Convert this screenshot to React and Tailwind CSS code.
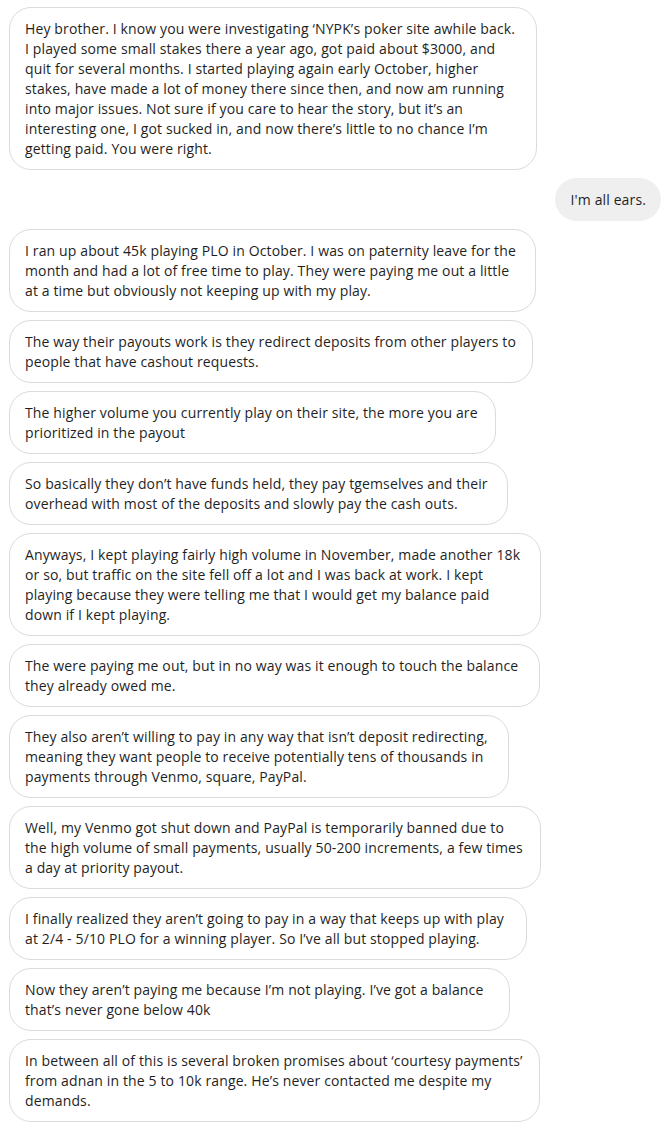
const messages = [
  {
    w: "w-[528px]",
    lines: [
      "Hey brother. I know you were investigating \u2018NYPK\u2019s poker site awhile back.",
      "I played some small stakes there a year ago, got paid about $3000, and",
      "quit for several months. I started playing again early October, higher",
      "stakes, have made a lot of money there since then, and now am running",
      "into major issues. Not sure if you care to hear the story, but it\u2019s an",
      "interesting one, I got sucked in, and now there\u2019s little to no chance I\u2019m",
      "getting paid. You were right.",
    ],
  },
  { me: true, lines: ["I'm all ears."] },
  {
    w: "w-[527px]",
    lines: [
      "I ran up about 45k playing PLO in October. I was on paternity leave for the",
      "month and had a lot of free time to play. They were paying me out a little",
      "at a time but obviously not keeping up with my play.",
    ],
  },
  {
    w: "w-[524px]",
    lines: [
      "The way their payouts work is they redirect deposits from other players to",
      "people that have cashout requests.",
    ],
  },
  {
    w: "w-[487px]",
    lines: [
      "The higher volume you currently play on their site, the more you are",
      "prioritized in the payout",
    ],
  },
  {
    w: "w-[499px]",
    lines: [
      "So basically they don\u2019t have funds held, they pay tgemselves and their",
      "overhead with most of the deposits and slowly pay the cash outs.",
    ],
  },
  {
    w: "w-[532px]",
    lines: [
      "Anyways, I kept playing fairly high volume in November, made another 18k",
      "or so, but traffic on the site fell off a lot and I was back at work. I kept",
      "playing because they were telling me that I would get my balance paid",
      "down if I kept playing.",
    ],
  },
  {
    w: "w-[531px]",
    lines: [
      "The were paying me out, but in no way was it enough to touch the balance",
      "they already owed me.",
    ],
  },
  {
    w: "w-[500px]",
    lines: [
      "They also aren\u2019t willing to pay in any way that isn\u2019t deposit redirecting,",
      "meaning they want people to receive potentially tens of thousands in",
      "payments through Venmo, square, PayPal.",
    ],
  },
  {
    w: "w-[532px]",
    lines: [
      "Well, my Venmo got shut down and PayPal is temporarily banned due to",
      "the high volume of small payments, usually 50-200 increments, a few times",
      "a day at priority payout.",
    ],
  },
  {
    w: "w-[518px]",
    lines: [
      "I finally realized they aren\u2019t going to pay in a way that keeps up with play",
      "at 2/4 - 5/10 PLO for a winning player. So I\u2019ve all but stopped playing.",
    ],
  },
  {
    w: "w-[501px]",
    lines: [
      "Now they aren\u2019t paying me because I\u2019m not playing. I\u2019ve got a balance",
      "that\u2019s never gone below 40k",
    ],
  },
  {
    w: "w-[531px]",
    lines: [
      "In between all of this is several broken promises about \u2018courtesy payments\u2019",
      "from adnan in the 5 to 10k range. He\u2019s never contacted me despite my",
      "demands.",
    ],
  },
];

function Bubble({ msg }) {
  if (msg.me) {
    return (
      <div className="flex justify-end">
        <div className="rounded-full bg-[#efefef] pl-4 pr-[15px] pt-3 pb-[11px] text-[#1f1f1f]">
          {msg.lines[0]}
        </div>
      </div>
    );
  }
  return (
    <div className="flex justify-start">
      <div
        className={`${msg.w} rounded-[22px] border border-[#dbdbdb] bg-white px-[15px] pt-[11px] pb-[10px] text-[#1f1f1f]`}
      >
        {msg.lines.map((l, i) => (
          <div key={i} className="whitespace-nowrap">
            {l}
          </div>
        ))}
      </div>
    </div>
  );
}

export default function App() {
  return (
    <div
      className="min-h-screen bg-white pl-[9px] pr-[7px] pt-[7px] text-[14px] leading-[20px] tracking-[0.13px]"
      style={{ fontFamily: '"Open Sans", "Noto Sans", sans-serif' }}
    >
      <div className="flex flex-col gap-2">
        {messages.map((m, i) => (
          <Bubble key={i} msg={m} />
        ))}
      </div>
    </div>
  );
}
